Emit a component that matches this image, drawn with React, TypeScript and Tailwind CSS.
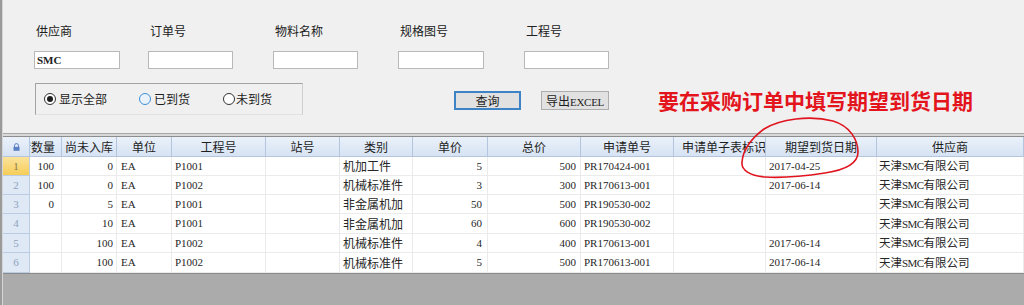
import React from "react";

const cjk = "font-['Noto_Sans_CJK_SC',sans-serif]";
const mix = "font-['Liberation_Serif','Noto_Sans_CJK_SC',serif]";

type Col = { w: string; cell: string; head: string; title: string };

const cols: Col[] = [
  { w: "w-[32px]", cell: "justify-end pr-[7px]", head: "justify-end pr-[6px]", title: "申请数量" },
  { w: "w-[55px]", cell: "justify-end pr-[3px]", head: "justify-center", title: "尚未入库" },
  { w: "w-[55px]", cell: "justify-start pl-[4px]", head: "justify-center", title: "单位" },
  { w: "w-[94px]", cell: "justify-start pl-[3px]", head: "justify-center", title: "工程号" },
  { w: "w-[74px]", cell: "justify-start pl-[3px]", head: "justify-center", title: "站号" },
  { w: "w-[73px]", cell: "justify-start pl-[3px]", head: "justify-center", title: "类别" },
  { w: "w-[75px]", cell: "justify-end pr-[5px]", head: "justify-center", title: "单价" },
  { w: "w-[93px]", cell: "justify-end pr-[4px]", head: "justify-center", title: "总价" },
  { w: "w-[93px]", cell: "justify-start pl-[3px]", head: "justify-center", title: "申请单号" },
  { w: "w-[92px]", cell: "justify-start pl-[3px]", head: "justify-start pl-[8px]", title: "申请单子表标识" },
  { w: "w-[111px]", cell: "justify-start pl-[3px]", head: "justify-center", title: "期望到货日期" },
  { w: "w-[147px]", cell: "justify-start pl-[2px]", head: "justify-center", title: "供应商" },
];

const rows = [
  ["100", "0", "EA", "P1001", "", "机加工件", "5", "500", "PR170424-001", "", "2017-04-25", "天津SMC有限公司"],
  ["100", "0", "EA", "P1002", "", "机械标准件", "3", "300", "PR170613-001", "", "2017-06-14", "天津SMC有限公司"],
  ["0", "5", "EA", "P1001", "", "非金属机加", "50", "500", "PR190530-002", "", "", "天津SMC有限公司"],
  ["", "10", "EA", "P1001", "", "非金属机加", "60", "600", "PR190530-002", "", "", "天津SMC有限公司"],
  ["", "100", "EA", "P1002", "", "机械标准件", "4", "400", "PR170613-001", "", "2017-06-14", "天津SMC有限公司"],
  ["", "100", "EA", "P1002", "", "机械标准件", "5", "500", "PR170613-001", "", "2017-06-14", "天津SMC有限公司"],
];

const rowH = ["h-[19px]", "h-[19px]", "h-[19px]", "h-[20px]", "h-[19px]", "h-[20px]"];

const fields = [
  { label: "供应商", value: "SMC", w: "w-[114px]", iw: "w-[86px]" },
  { label: "订单号", value: "", w: "w-[125px]", iw: "w-[85px]" },
  { label: "物料名称", value: "", w: "w-[125px]", iw: "w-[85px]" },
  { label: "规格图号", value: "", w: "w-[126px]", iw: "w-[86px]" },
  { label: "工程号", value: "", w: "w-[125px]", iw: "w-[85px]" },
];

function CellText({ text, idx }: { text: string; idx: number }) {
  if (idx === 5) return <span className={`${cjk} text-[12px]`}>{text}</span>;
  if (idx === 11 && text)
    return (
      <span className={`${cjk} text-[11.5px]`}>
        天津<span className={`${mix} text-[11px] tracking-[-0.6px]`}>SMC</span>有限公司
      </span>
    );
  return <span className={`${mix} text-[11px]`}>{text}</span>;
}

function Radio({ checked, hover }: { checked?: boolean; hover?: boolean }) {
  return (
    <span
      className={`w-[12px] h-[12px] rounded-full border flex items-center justify-center shrink-0 ${
        hover ? "border-[#3c8fd6] bg-[#eaf3fb]" : "border-[#333333] bg-white"
      }`}
    >
      {checked && <span className="w-[6px] h-[6px] rounded-full bg-[#1c1c1c]" />}
    </span>
  );
}

export default function App() {
  return (
    <div className={`relative w-[1024px] h-[305px] flex bg-[#f0f0f0] overflow-hidden ${cjk}`}>
      <div className="w-[2px] bg-[#9a9a9a] shrink-0" />
      <div className="w-[1px] bg-[#d6d6d6] shrink-0" />
      <div className="flex-1 flex flex-col min-w-0">
        {/* query panel */}
        <div className="h-[133px] pl-[31px] pt-[23px] shrink-0">
          <div className="flex">
            {fields.map((f) => (
              <div key={f.label} className={`${f.w} flex flex-col`}>
                <div className="h-[16px] leading-[16px] text-[12px] text-[#202020] pl-[2px]">{f.label}</div>
                <div
                  className={`${f.iw} h-[18px] mt-[12px] bg-white border border-[#b8b8b8] flex items-center pl-[2px] ${mix} text-[11px] font-bold text-[#222]`}
                >
                  {f.value}
                </div>
              </div>
            ))}
          </div>
          <div className="flex items-start mt-[14px]">
            <div className="ml-[1px] w-[268px] h-[32px] border-t border-l border-[#a2a2a2] border-r border-b border-r-[#cfcfcf] border-b-[#e2e2e2] flex items-center pl-[8px] text-[12px] text-[#1e1e1e]">
              <div className="w-[95px] flex items-center gap-[3px]">
                <Radio checked />
                <span>显示全部</span>
              </div>
              <div className="w-[84px] flex items-center gap-[3px]">
                <Radio hover />
                <span>已到货</span>
              </div>
              <div className="flex items-center gap-[1px]">
                <Radio />
                <span>未到货</span>
              </div>
            </div>
            <button className="ml-[151px] mt-[8px] w-[67px] h-[19px] border-2 border-[#3d83c6] bg-[#e1e1e1] text-[12px] leading-[15px] text-[#1e1e1e]">
              查询
            </button>
            <button className="ml-[20px] mt-[8px] w-[68px] h-[19px] border border-[#adadad] bg-[#e1e1e1] text-[12px] leading-[17px] text-[#1e1e1e]">
              导出<span className={`${mix} text-[11px] tracking-[-0.3px]`}>EXCEL</span>
            </button>
            <div className="ml-[49px] mt-[5px] text-[21px] leading-[24px] font-bold text-[#e3141c] whitespace-nowrap">
              要在采购订单中填写期望到货日期
            </div>
          </div>
        </div>

        {/* splitter */}
        <div className="h-[1px] bg-[#a6a6a6] shrink-0" />
        <div className="h-[2px] bg-[#d9d9d9] shrink-0" />
        <div className="h-[1px] bg-[#8d8d8d] shrink-0" />

        {/* grid */}
        <div className="flex flex-col bg-white shrink-0">
          <div className="flex h-[20px]">
            <div className="w-[27px] shrink-0 flex items-center justify-center bg-gradient-to-b from-[#eaf1fa] to-[#d7e3f3] border-r border-b border-[#b3c6de]">
              <svg width="7" height="8" viewBox="0 0 7 8">
                <path d="M1.5 4V2.6a2 2 0 0 1 4 0V4" fill="none" stroke="#5a7fc4" strokeWidth="1" />
                <rect x="0.5" y="3.8" width="6" height="4" fill="#5a7fc4" />
              </svg>
            </div>
            {cols.map((c) => (
              <div
                key={c.title}
                className={`${c.w} ${c.head} shrink-0 flex items-center overflow-hidden whitespace-nowrap bg-gradient-to-b from-[#eaf1fa] to-[#d7e3f3] border-r border-b border-[#b3c6de] text-[12px] text-[#1e1e1e]`}
              >
                <span className="shrink-0">{c.title}</span>
              </div>
            ))}
          </div>
          {rows.map((r, ri) => (
            <div key={ri} className={`flex ${rowH[ri]}`}>
              <div
                className={`w-[27px] shrink-0 flex items-center justify-center border-r border-b border-[#bccde3] ${mix} text-[11px] ${
                  ri === 0 ? "bg-gradient-to-b from-[#fbe39a] to-[#f6cd55] text-[#8c7a4a]" : "bg-[#dfe8f5] text-[#8ea3c0]"
                }`}
              >
                {ri + 1}
              </div>
              {r.map((v, ci) => (
                <div
                  key={ci}
                  className={`${cols[ci].w} ${cols[ci].cell} shrink-0 flex items-center overflow-hidden whitespace-nowrap border-r border-b border-[#ebebeb] text-[#262626]`}
                >
                  <CellText text={v} idx={ci} />
                </div>
              ))}
            </div>
          ))}
        </div>

        {/* empty grid area */}
        <div className="flex-1 bg-[#ababab] border-t border-[#8a8a8a]" />
      </div>

      {/* hand-drawn mark */}
      <svg className="absolute inset-0 pointer-events-none" width="1024" height="305">
        <path
          d="M764 129 C780 119, 810 115, 833 121 C850 126, 858 140, 858 152 C858 164, 845 170, 825 173 C805 176, 780 178, 765 177 C750 176, 741 170, 742 162 C743 150, 752 138, 764 129"
          fill="none"
          stroke="#e0141e"
          strokeWidth="1.6"
        />
      </svg>
    </div>
  );
}
